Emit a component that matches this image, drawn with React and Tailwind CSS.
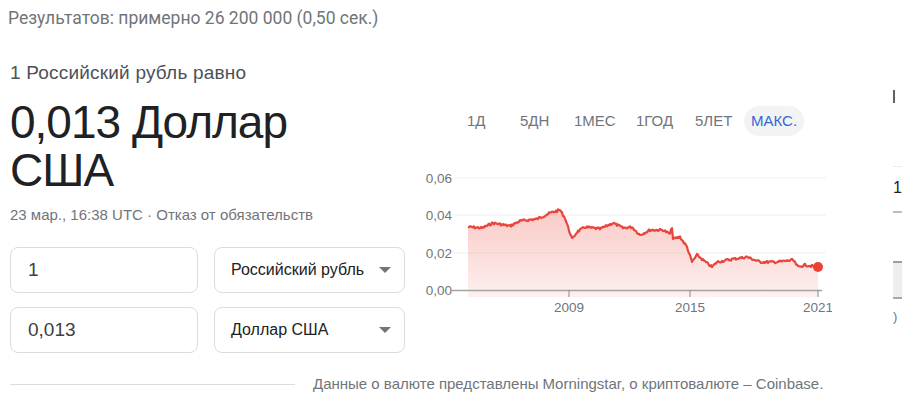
import React from "react";

const keyPoints = [
    [468, 227], [482, 228], [493, 223], [510, 226], [520, 221], [537, 219],
    [550, 213], [560, 210], [565, 218], [572, 239], [577, 232], [585, 227],
    [600, 229], [613, 223], [623, 228], [632, 227], [640, 235], [650, 230],
    [663, 230], [670, 234], [672, 227], [673, 239], [680, 237], [687, 247],
    [692, 262], [697, 255], [703, 260], [712, 267], [717, 262], [733, 259],
    [747, 257], [760, 262], [777, 262], [793, 260], [798, 267], [805, 265],
    [818, 267],
];

// chart svg sits at page x=416, y=160
const OX = 416;
const OY = 160;

const buildLine = () => {
    let seed = 7;
    const rand = () => {
        seed = (seed * 9301 + 49297) % 233280;
        return seed / 233280;
    };
    const pts = [];
    for (let i = 0; i < keyPoints.length - 1; i++) {
        const [x1, y1] = keyPoints[i];
        const [x2, y2] = keyPoints[i + 1];
        for (let x = x1; x < x2; x += 1) {
            const t = (x - x1) / (x2 - x1);
            const y = y1 + (y2 - y1) * t + (rand() - 0.5) * 2.4;
            pts.push([x - OX, y - OY]);
        }
    }
    const last = keyPoints[keyPoints.length - 1];
    pts.push([last[0] - OX, last[1] - OY]);
    return pts;
};

const linePts = buildLine();
const lineD = linePts
    .map(([x, y], i) => `${i === 0 ? "M" : "L"}${x.toFixed(1)} ${y.toFixed(1)}`)
    .join(" ");
const areaD = `${lineD} L${818 - OX} ${297 - OY} L${468 - OX} ${297 - OY} Z`;

// label + slot width so each tab starts where the reference has it
const tabs = [
    ["1Д", "w-[53px]"],
    ["5ДН", "w-[54px]"],
    ["1МЕС", "w-[62px]"],
    ["1ГОД", "w-[59px]"],
    ["5ЛЕТ", "w-[56px]"],
];

const Chart = () => (
    <svg width="416" height="160" viewBox="0 0 416 160" className="block">
        <defs>
            <linearGradient id="fill" x1="0" y1="0" x2="0" y2="1">
                <stop offset="0%" stopColor="#ea4335" stopOpacity="0.28" />
                <stop offset="100%" stopColor="#ea4335" stopOpacity="0.08" />
            </linearGradient>
        </defs>
        {/* grid */}
        {[178, 215, 253].map((y) => (
            <line key={y} x1={452 - OX} x2={826 - OX} y1={y - OY} y2={y - OY} stroke="#f0f0f0" strokeWidth="1" />
        ))}
        {[
            ["0,06", 178],
            ["0,04", 215],
            ["0,02", 253],
            ["0,00", 290],
        ].map(([t, y]) => (
            <text key={t} x={452 - OX} y={y - OY + 5} textAnchor="end" fontSize="13.5" fill="#70757a" fontFamily="'Liberation Sans', Arial, sans-serif">
                {t}
            </text>
        ))}
        <path d={areaD} fill="url(#fill)" />
        <line x1={452 - OX} x2={822 - OX} y1={290.5 - OY} y2={290.5 - OY} stroke="#a3a3a3" strokeWidth="1.5" />
        {[
            ["2009", 569],
            ["2015", 690],
            ["2021", 818],
        ].map(([t, x]) => (
            <g key={t}>
                <line x1={x - OX} x2={x - OX} y1={290 - OY} y2={297 - OY} stroke="#8a8a8a" strokeWidth="1" />
                <text x={x - OX} y={312 - OY} textAnchor="middle" fontSize="13.5" fill="#70757a" fontFamily="'Liberation Sans', Arial, sans-serif">
                    {t}
                </text>
            </g>
        ))}
        <path d={lineD} fill="none" stroke="#e8453c" strokeWidth="2.2" strokeLinejoin="round" />
        <circle cx={818 - OX} cy={267 - OY} r="5" fill="#ea4335" />
    </svg>
);

const Field = ({ children }) => (
    <div className="w-[188px] h-[46px] border border-[#dadce0] rounded-lg flex items-center pl-[17px] text-[19px] text-[#3c4043]">
        {children}
    </div>
);

const Select = ({ children }) => (
    <div className="w-[191px] h-[46px] border border-[#dadce0] rounded-lg flex items-center justify-between pl-4 pr-[13px] text-[16px] text-[#202124]">
        <span>{children}</span>
        <span className="w-0 h-0 border-l-[6px] border-r-[6px] border-t-[6px] border-l-transparent border-r-transparent border-t-[#70757a]" />
    </div>
);

export default function App() {
    return (
        <div className="w-[902px] h-[400px] overflow-hidden bg-white relative font-['Liberation_Sans',Arial,sans-serif]">
            <div className="pl-2 pt-[7px] text-[17.5px] leading-[22px] text-[#70757a] font-['Roboto',Arial,sans-serif]">
                Результатов: примерно 26 200 000 (0,50 сек.)
            </div>

            <div className="flex">
                {/* converter */}
                <div className="w-[404px] ml-[10px] shrink-0">
                    <div className="mt-[33px] text-[19px] leading-[22px] tracking-[0.2px] text-[#4d5156]">
                        1 Российский рубль равно
                    </div>
                    <div className="mt-[14px] text-[46px] leading-[48px] tracking-[-1px] text-[#202124]">
                        0,013 Доллар
                        <br />
                        США
                    </div>
                    <div className="mt-[12px] text-[15px] leading-[18px] text-[#70757a]">
                        23 мар., 16:38 UTC · Отказ от обязательств
                    </div>
                    <div className="mt-[23px] flex gap-4">
                        <Field>1</Field>
                        <Select>Российский рубль</Select>
                    </div>
                    <div className="mt-[14px] flex gap-4">
                        <Field>0,013</Field>
                        <Select>Доллар США</Select>
                    </div>
                </div>

                {/* chart */}
                <div className="ml-[2px] w-[416px] shrink-0">
                    <div className="mt-[77px] ml-[51px] flex items-center text-[15px] text-[#70757a]">
                        {tabs.map(([t, w]) => (
                            <span key={t} className={`${w}`}>
                                {t}
                            </span>
                        ))}
                        <span className="ml-[-7px] px-[7px] h-[30px] leading-[30px] rounded-full bg-[#f1f3f4] text-[#3367d6]">
                            МАКС.
                        </span>
                    </div>
                    <div className="mt-[24px]">
                        <Chart />
                    </div>
                </div>

                {/* neighbour card, clipped */}
                <div className="ml-[61px] w-[40px] shrink-0">
                    <div className="mt-[61px] w-[2px] h-[13px] bg-[#5f6368]" />
                    <div className="mt-[63px] h-px bg-[#ececec]" />
                    <div className="mt-[13px] text-[16px] leading-[16px] text-[#202124]">1</div>
                    <div className="mt-[15px] h-[2px] bg-[#bdbdbd]" />
                    <div className="mt-[48px] h-[38px] bg-[#eeeeee] border-t-2 border-[#9e9e9e] border-b-2 border-b-[#a8a8a8]" />
                    <div className="mt-[11px] text-[13px] leading-[14px] text-[#70757a]">)</div>
                </div>
            </div>

            <div className="absolute left-[10px] top-[375px] flex items-center">
                <div className="w-[285px] h-px bg-[#dadce0]" />
                <div className="ml-[18px] text-[15px] leading-[18px] text-[#70757a]">
                    Данные о валюте представлены Morningstar, о криптовалюте – Coinbase.
                </div>
            </div>
        </div>
    );
}
